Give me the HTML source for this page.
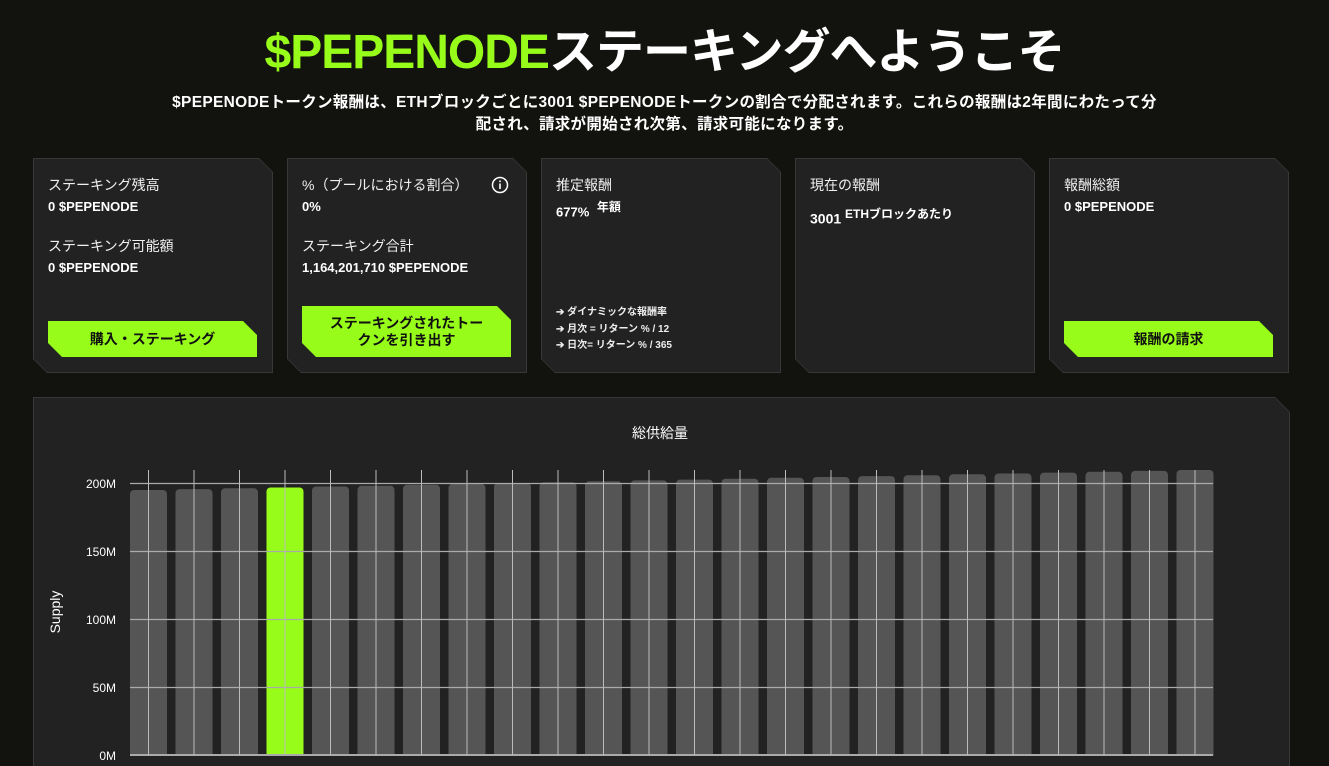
<!DOCTYPE html>
<html><head><meta charset="utf-8"><style>
*{margin:0;padding:0;box-sizing:border-box}
html,body{width:1329px;height:766px;overflow:hidden}
body{background:#12120e;font-family:"Liberation Sans","Noto Sans CJK JP",sans-serif;color:#fff;position:relative}
h1{position:absolute;top:22px;left:0;width:1329px;text-align:center;font-size:48px;font-weight:bold;letter-spacing:-1px;line-height:62px}
h1 span{color:#97fc1a}
.sub{position:absolute;top:92px;left:0;width:1329px;text-align:center;font-size:15.5px;letter-spacing:0.3px;font-weight:bold;line-height:22px;white-space:nowrap}
.card{position:absolute;top:158px;width:240px;height:215px;background:#38383a;clip-path:polygon(0 0,calc(100% - 14px) 0,100% 14px,100% 100%,14px 100%,0 calc(100% - 14px))}
.in{position:absolute;inset:1px;background:#222222;clip-path:polygon(0 0,calc(100% - 13px) 0,100% 13px,100% 100%,13px 100%,0 calc(100% - 13px));padding:16px 14px}
.l{font-size:14px;line-height:20px;color:#f0f0f0}
.v{font-size:13px;font-weight:bold;line-height:18px;margin-top:3px}
.btn{position:absolute;background:#97fc1a;color:#111;font-weight:bold;font-size:14px;text-align:center;clip-path:polygon(0 0,calc(100% - 14px) 0,100% 14px,100% 100%,14px 100%,0 calc(100% - 14px))}
.small{font-size:10px;line-height:16.5px;font-weight:bold;color:#eee}
.panel{position:absolute;left:33px;top:397px;width:1257px;height:369px;background:#38383a;clip-path:polygon(0 0,calc(100% - 15px) 0,100% 15px,100% 100%,0 100%)}
.panel .pi{position:absolute;inset:1px 1px 0 1px;background:#222;clip-path:polygon(0 0,calc(100% - 14px) 0,100% 14px,100% 100%,0 100%)}
</style></head><body>
<h1><span>$PEPENODE</span>ステーキングへようこそ</h1>
<div class="sub">$PEPENODEトークン報酬は、ETHブロックごとに3001 $PEPENODEトークンの割合で分配されます。これらの報酬は2年間にわたって分<br>配され、請求が開始され次第、請求可能になります。</div>

<div class="card" style="left:33px"><div class="in">
<div class="l">ステーキング残高</div><div class="v">0 $PEPENODE</div>
<div class="l" style="margin-top:20px">ステーキング可能額</div><div class="v">0 $PEPENODE</div>
<div class="btn" style="left:14px;top:162px;width:209px;height:36px;line-height:36px">購入・ステーキング</div>
</div></div>

<div class="card" style="left:287px"><div class="in">
<div class="l">%（プールにおける割合）</div><div class="v">0%</div>
<svg style="position:absolute;left:203px;top:17px" width="18" height="18"><circle cx="9" cy="9" r="7.5" fill="none" stroke="#fff" stroke-width="1.5"/><rect x="8.2" y="7.5" width="1.6" height="5.5" fill="#fff"/><rect x="8.2" y="4.5" width="1.6" height="1.6" fill="#fff"/></svg>
<div class="l" style="margin-top:20px">ステーキング合計</div><div class="v">1,164,201,710 $PEPENODE</div>
<div class="btn" style="left:14px;top:147px;width:209px;height:51px;line-height:17px;padding-top:9px">ステーキングされたトー<br>クンを引き出す</div>
</div></div>

<div class="card" style="left:541px"><div class="in">
<div class="l">推定報酬</div><div class="v">677% <sup style="font-size:12px;margin-left:4px">年額</sup></div>
<div class="small" style="position:absolute;left:14px;top:146px">➔ ダイナミックな報酬率<br>➔ 月次 = リターン % / 12<br>➔ 日次= リターン % / 365</div>
</div></div>

<div class="card" style="left:795px"><div class="in">
<div class="l">現在の報酬</div><div class="v" style="margin-top:10px;font-size:14px">3001 <sup style="font-size:12px">ETHブロックあたり</sup></div>
</div></div>

<div class="card" style="left:1049px"><div class="in">
<div class="l">報酬総額</div><div class="v">0 $PEPENODE</div>
<div class="btn" style="left:14px;top:162px;width:209px;height:36px;line-height:36px">報酬の請求</div>
</div></div>

<div class="panel"><div class="pi"></div></div>

<svg style="position:absolute;left:0;top:0" width="1329" height="766" font-family="Liberation Sans, sans-serif">
<text x="660" y="438" fill="#fff" font-size="14" text-anchor="middle" font-family="Liberation Sans, Noto Sans CJK JP, sans-serif">総供給量</text>
<text transform="translate(60,612) rotate(-90)" fill="#fff" font-size="14" text-anchor="middle">Supply</text>
<g fill="#fff" font-size="12" text-anchor="end">
<text x="116" y="488">200M</text><text x="116" y="556">150M</text><text x="116" y="624">100M</text><text x="116" y="692">50M</text><text x="116" y="760">0M</text></g>
<g fill="#555">
<rect x="130" y="490" width="37" height="300" rx="4"/>
<rect x="175.5" y="489.1" width="37" height="300" rx="4"/>
<rect x="221" y="488.3" width="37" height="300" rx="4"/>
<rect x="266.5" y="487.5" width="37" height="300" rx="4" fill="#97fc1a"/>
<rect x="312" y="486.5" width="37" height="300" rx="4"/>
<rect x="357.5" y="485.7" width="37" height="300" rx="4"/>
<rect x="403" y="484.8" width="37" height="300" rx="4"/>
<rect x="448.5" y="483.9" width="37" height="300" rx="4"/>
<rect x="494" y="483" width="37" height="300" rx="4"/>
<rect x="539.5" y="482.2" width="37" height="300" rx="4"/>
<rect x="585" y="481.3" width="37" height="300" rx="4"/>
<rect x="630.5" y="480.4" width="37" height="300" rx="4"/>
<rect x="676" y="479.6" width="37" height="300" rx="4"/>
<rect x="721.5" y="478.7" width="37" height="300" rx="4"/>
<rect x="767" y="477.8" width="37" height="300" rx="4"/>
<rect x="812.5" y="477" width="37" height="300" rx="4"/>
<rect x="858" y="476.1" width="37" height="300" rx="4"/>
<rect x="903.5" y="475.2" width="37" height="300" rx="4"/>
<rect x="949" y="474.3" width="37" height="300" rx="4"/>
<rect x="994.5" y="473.5" width="37" height="300" rx="4"/>
<rect x="1040" y="472.6" width="37" height="300" rx="4"/>
<rect x="1085.5" y="471.7" width="37" height="300" rx="4"/>
<rect x="1131" y="470.9" width="37" height="300" rx="4"/>
<rect x="1176.5" y="470" width="37" height="300" rx="4"/>
</g>
<rect x="125" y="756" width="1100" height="20" fill="#222"/>
<g stroke="#aaa" stroke-width="1.3">
<line x1="130" y1="483.5" x2="1213" y2="483.5"/><line x1="130" y1="551.5" x2="1213" y2="551.5"/><line x1="130" y1="619.5" x2="1213" y2="619.5"/><line x1="130" y1="687.5" x2="1213" y2="687.5"/><line x1="130" y1="755" x2="1213" y2="755" stroke-width="2"/>
</g>
<g stroke="#bbb" stroke-width="1">
<path d="M148.5 470V755M194 470V755M239.5 470V755M285 470V755M330.5 470V755M376 470V755M421.5 470V755M467 470V755M512.5 470V755M558 470V755M603.5 470V755M649 470V755M694.5 470V755M740 470V755M785.5 470V755M831 470V755M876.5 470V755M922 470V755M967.5 470V755M1013 470V755M1058.5 470V755M1104 470V755M1149.5 470V755M1195 470V755"/>
</g>
</svg>
</body></html>
